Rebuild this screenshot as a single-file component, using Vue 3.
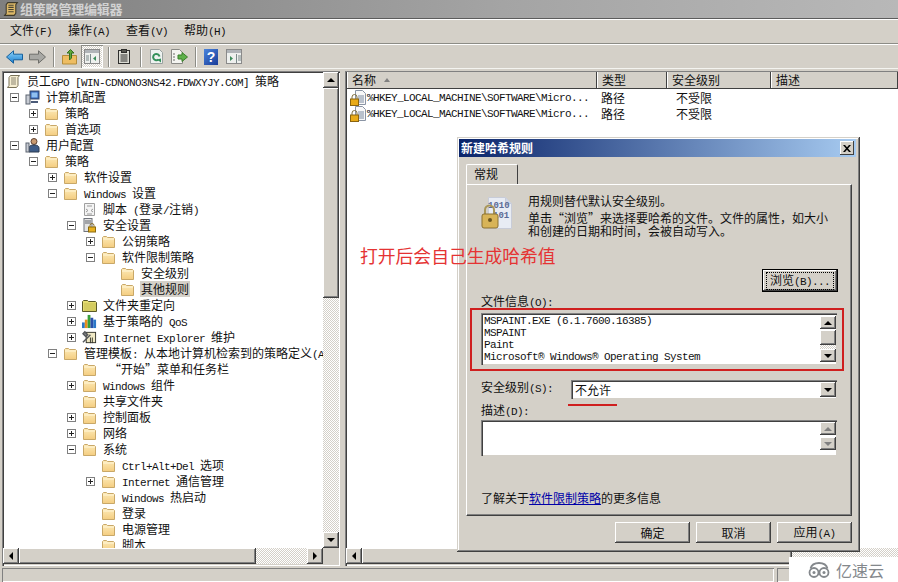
<script setup>
const tree = [
  { l: -1, e: '', i: 'scroll', t: '员工GPO [WIN-CDNONO3NS42.FDWXYJY.COM] 策略' },
  { l: 0, e: 'm', i: 'computer', t: '计算机配置' },
  { l: 1, e: 'p', i: 'folder', t: '策略' },
  { l: 1, e: 'p', i: 'folder', t: '首选项' },
  { l: 0, e: 'm', i: 'user', t: '用户配置' },
  { l: 1, e: 'm', i: 'folder', t: '策略' },
  { l: 2, e: 'p', i: 'folder', t: '软件设置' },
  { l: 2, e: 'm', i: 'folder', t: 'Windows 设置' },
  { l: 3, e: '', i: 'script', t: '脚本 (登录/注销)' },
  { l: 3, e: 'm', i: 'secure', t: '安全设置' },
  { l: 4, e: 'p', i: 'folder', t: '公钥策略' },
  { l: 4, e: 'm', i: 'folder', t: '软件限制策略' },
  { l: 5, e: '', i: 'folder', t: '安全级别' },
  { l: 5, e: '', i: 'folder', t: '其他规则', sel: true },
  { l: 3, e: 'p', i: 'redirect', t: '文件夹重定向' },
  { l: 3, e: 'p', i: 'qos', t: '基于策略的 QoS' },
  { l: 3, e: 'p', i: 'ie', t: 'Internet Explorer 维护' },
  { l: 2, e: 'm', i: 'folder', t: '管理模板: 从本地计算机检索到的策略定义(A' },
  { l: 3, e: '', i: 'folder', t: ' “开始”菜单和任务栏' },
  { l: 3, e: 'p', i: 'folder', t: 'Windows 组件' },
  { l: 3, e: '', i: 'folder', t: '共享文件夹' },
  { l: 3, e: 'p', i: 'folder', t: '控制面板' },
  { l: 3, e: 'p', i: 'folder', t: '网络' },
  { l: 3, e: 'm', i: 'folder', t: '系统' },
  { l: 4, e: '', i: 'folder', t: 'Ctrl+Alt+Del 选项' },
  { l: 4, e: 'p', i: 'folder', t: 'Internet 通信管理' },
  { l: 4, e: '', i: 'folder', t: 'Windows 热启动' },
  { l: 4, e: '', i: 'folder', t: '登录' },
  { l: 4, e: '', i: 'folder', t: '电源管理' },
  { l: 4, e: '', i: 'folder', t: '脚本' }
]
const menus = [
  ['文件', '(F)'],
  ['操作', '(A)'],
  ['查看', '(V)'],
  ['帮助', '(H)']
]
const columns = [
  { t: '名称', w: 250, sort: true },
  { t: '类型', w: 70 },
  { t: '安全级别', w: 104 },
  { t: '描述', w: 127 }
]
const rules = [1, 2]
const fileLines = [
  'MSPAINT.EXE (6.1.7600.16385)',
  'MSPAINT',
  'Paint',
  'Microsoft® Windows® Operating System'
]
function segs(s) {
  return s.match(/[\x20-\x7e®]+|[^\x20-\x7e®]+/g).map((x) => ({
    x,
    lat: /^[\x20-\x7e®]/.test(x)
  }))
}
function rowPad(r) {
  return r.l < 0 ? '6px' : 10 + 19 * r.l + 'px'
}
</script>

<template>
  <div class="app">
    <svg class="defs" width="0" height="0" aria-hidden="true">
      <defs>
        <linearGradient id="fg" x1="0" y1="0" x2="0" y2="1">
          <stop offset="0" stop-color="#fdeab8" />
          <stop offset="1" stop-color="#f4cd80" />
        </linearGradient>
        <linearGradient id="blue" x1="0" y1="0" x2="0" y2="1">
          <stop offset="0" stop-color="#8fd4fa" />
          <stop offset="1" stop-color="#1b7fd0" />
        </linearGradient>
        <symbol id="folder" viewBox="0 0 15 15">
          <path d="M1.500 13.500V3.500l1-1h3l1 1h6l1 1v9z" fill="url(#fg)" stroke="#c9a868" />
          <path d="M2 5h11" stroke="#fff6d8" />
        </symbol>
        <symbol id="scroll" viewBox="0 0 15 15">
          <path d="M4.500 1.500h9l-1.500 2v8l-1.500 2h-9l1.500-2v-8z" fill="#f6eed2" stroke="#7a7258" />
          <path d="M5 4h5M5 6h5M5 8h5M5 10h5" stroke="#8a8470" />
        </symbol>
        <symbol id="computer" viewBox="0 0 15 15">
          <rect x="5" y="1" width="9" height="8" fill="#2f62b8" stroke="#3a4a68" />
          <rect x="6.500" y="2.500" width="6" height="5" fill="#8fc0f0" />
          <rect x="1" y="5" width="4" height="9" fill="#c8ccd4" stroke="#5c6470" />
          <path d="M6 11h7v2H6z" fill="#4a5a78" />
        </symbol>
        <symbol id="user" viewBox="0 0 15 15">
          <circle cx="9" cy="3.500" r="3" fill="#c99a70" stroke="#5c4030" />
          <path d="M4 14V10q0-3 5-3t5 3v4z" fill="#3d5c88" stroke="#2c3a50" />
          <rect x="1" y="5" width="3" height="9" fill="#c8ccd4" stroke="#5c6470" />
        </symbol>
        <symbol id="script" viewBox="0 0 15 15">
          <path d="M2.500 1.500h10v12h-10z" fill="#f4f4f4" stroke="#a0a0a0" />
          <path d="M5 4h5M4 7l2 1.500L4 10M11 7L9 8.500l2 1.500M5 12h5" stroke="#9a9a9a" fill="none" />
        </symbol>
        <symbol id="secure" viewBox="0 0 15 15">
          <rect x="2" y="0.500" width="8" height="13" fill="#e4e4e4" stroke="#70747c" />
          <path d="M3 3h6M3 5h6" stroke="#60646c" />
          <path d="M8 9V7.500a2 2 0 0 1 4 0V9" fill="none" stroke="#8a7030" />
          <rect x="6.500" y="9" width="7" height="5" fill="#e8b020" stroke="#8a6a10" />
        </symbol>
        <symbol id="redirect" viewBox="0 0 15 15">
          <path d="M.5 13.500V3.500l1-1h4l1 1h7l1 1v9z" fill="#e4dc70" stroke="#5a5a28" />
          <path d="M2 6h12M2 8h12M2 10h12M2 12h12" stroke="#c4bc50" />
        </symbol>
        <symbol id="qos" viewBox="0 0 16 16">
          <rect x="0" y="9" width="3" height="6" fill="#2c78c8" />
          <rect x="3" y="6" width="3" height="9" fill="#e89020" />
          <rect x="6" y="1" width="3" height="14" fill="#38a038" />
          <rect x="9" y="4" width="3" height="11" fill="#2c50a8" />
          <rect x="12" y="6" width="3" height="9" fill="#2c78c8" />
        </symbol>
        <symbol id="ie" viewBox="0 0 16 16">
          <rect x="4.500" y="2.500" width="10" height="11" fill="#efe8c4" stroke="#33332a" />
          <path d="M1 13L9 5M3 2l3 3-2 2-3-3z" stroke="#55585c" stroke-width="1.600" fill="#888" />
          <path d="M9 8v6M11 8v6" stroke="#33332a" />
        </symbol>
        <symbol id="ruledoc" viewBox="0 0 16 16">
          <path d="M5.500 .5h7l3 3v11h-10z" fill="#f8f8f8" stroke="#8a94a4" />
          <path d="M8 6h6M8 8h6M8 10h6M8 12h6" stroke="#7a8aa0" />
          <path d="M2 9V7a2.500 2.500 0 0 1 5 0v2" fill="none" stroke="#807040" />
          <rect x=".5" y="9" width="8" height="6.500" fill="#e8aa18" stroke="#8a6410" />
        </symbol>
      </defs>
    </svg>

    <header class="title">
      <svg class="title-ico" width="16" height="16" viewBox="0 0 15 15">
        <path d="M4.500 1.500h9l-1.500 2v8l-1.500 2h-9l1.500-2v-8z" fill="#dcb868" stroke="#3e3a2c" />
        <path d="M5 4h5M5 6h5M5 8h5M5 10h5" stroke="#4a4432" />
      </svg>
      <span>组策略管理编辑器</span>
    </header>

    <nav class="menu">
      <span v-for="m in menus" :key="m[0]" class="menu-item">{{ m[0] }}<span class="lat">{{ m[1] }}</span></span>
    </nav>

    <div class="toolbar">
      <svg width="17" height="14" viewBox="0 0 17 14" class="t1">
        <path d="M.5 7L7.500.8v3.400h9v5.600h-9v3.400z" fill="url(#blue)" stroke="#17609c" />
      </svg>
      <svg width="17" height="14" viewBox="0 0 17 14" class="t2">
        <path d="M16.500 7L9.500.8v3.400h-9v5.600h9v3.400z" fill="#a8a8a4" stroke="#6e6e6a" />
      </svg>
      <i class="tsep t3"></i>
      <svg width="15" height="16" viewBox="0 0 15 16" class="t4">
        <path d="M.5 15V6.500h14V15z" fill="#eebd62" stroke="#b58d3a" />
        <path d="M7.500 11V4H5l3.500-3.500L12 4H9.500v5z" fill="#5ea83a" stroke="#34701e" />
      </svg>
      <span class="tpress t5">
        <svg width="16" height="15" viewBox="0 0 16 15">
          <rect x=".5" y=".5" width="15" height="14" fill="#eef0ee" stroke="#8a8a8a" />
          <rect x="1" y="1" width="14" height="3" fill="#b0b4b8" />
          <path d="M6.500 5v9M2 7h3M2 9h3M2 11h3" stroke="#7a8a8a" />
          <path d="M12 7v5l-3-2.500z" fill="#3a8a5a" />
        </svg>
      </span>
      <i class="tsep t6"></i>
      <svg width="12" height="15" viewBox="0 0 12 15" class="t7">
        <rect x=".5" y="1.500" width="11" height="13" fill="#dcdcd4" stroke="#2e2e2c" />
        <rect x="3.500" y=".5" width="5" height="3" fill="#55554f" stroke="#2e2e2c" />
        <path d="M2.500 6h7M2.500 8h7M2.500 10h7M2.500 12h7" stroke="#2e2e2c" />
      </svg>
      <i class="tsep t8"></i>
      <svg width="13" height="15" viewBox="0 0 13 15" class="t9">
        <path d="M.5.5h9l3 3v11H.500z" fill="#eef2f0" stroke="#9aa2a0" />
        <path d="M9.500 7.500a3.200 3.200 0 1 0-1 3" fill="none" stroke="#33905a" stroke-width="2" />
        <path d="M7 10.500l4-1v4z" fill="#33905a" />
      </svg>
      <svg width="17" height="15" viewBox="0 0 17 15" class="t10">
        <path d="M.5.5h8l3 3v11h-11z" fill="#f4f4f0" stroke="#8a8a86" />
        <path d="M2 5h2M2 8h2M2 11h2" stroke="#6a6a66" />
        <path d="M7 6h4V3.500L16.500 8 11 12.500V10H7z" fill="#5eb04a" stroke="#3a7e2a" />
      </svg>
      <i class="tsep t11"></i>
      <span class="help t12">?</span>
      <svg width="16" height="15" viewBox="0 0 16 15" class="t13">
        <rect x=".5" y=".5" width="15" height="14" fill="#eef0ee" stroke="#8a8a8a" />
        <rect x="1" y="1" width="14" height="3" fill="#b0b4b8" />
        <path d="M10.500 5v9M12 7h3M12 9h3M12 11h3" stroke="#7a8a8a" />
        <path d="M4 7v5l3-2.500z" fill="#3a8a5a" />
      </svg>
    </div>

    <main class="main">
      <section class="pane left">
        <div class="pane-body">
          <div class="tree">
            <div v-for="(r, n) in tree" :key="n" class="row" :style="{ paddingLeft: rowPad(r) }">
              <span v-if="r.l >= 0" class="exp" :class="{ none: !r.e }">
                <i v-if="r.e" class="dash"></i>
                <i v-if="r.e === 'p'" class="bar"></i>
              </span>
              <svg class="node-ico" width="15" height="15"><use :href="'#' + r.i" /></svg>
              <span class="label" :class="{ sel: r.sel }">
                <span v-for="(s, k) in segs(r.t)" :key="k" :class="{ lat: s.lat }">{{ s.x }}</span>
              </span>
            </div>
          </div>
          <div class="vbar">
            <span class="sbtn"><i class="tri up"></i></span>
            <span class="vthumb"></span>
            <span class="track"></span>
            <span class="sbtn"><i class="tri down"></i></span>
          </div>
        </div>
        <div class="hbar">
          <span class="sbtn"><i class="tri lft"></i></span>
          <span class="hthumb left-thumb"></span>
          <span class="track"></span>
          <span class="sbtn"><i class="tri rgt"></i></span>
          <span class="corner"></span>
        </div>
      </section>

      <section class="pane right">
        <div class="list-head">
          <span v-for="c in columns" :key="c.t" class="col" :style="{ width: c.w + 'px' }">
            {{ c.t }}<i v-if="c.sort" class="sort"></i>
          </span>
        </div>
        <div class="list-body">
          <div v-for="r in rules" :key="r" class="list-row">
            <span class="c-name">
              <svg width="16" height="16"><use href="#ruledoc" /></svg>
              <span class="lat">%HKEY_LOCAL_MACHINE\SOFTWARE\Micro...</span>
            </span>
            <span class="c-type">路径</span>
            <span class="c-level">不受限</span>
          </div>
        </div>
        <div class="hbar right-bar">
          <span class="sbtn"><i class="tri lft"></i></span>
          <span class="hthumb right-thumb"></span>
          <span class="track"></span>
        </div>
      </section>
    </main>

    <footer class="status">
      <span class="stat-a"></span>
      <span class="stat-b"></span>
    </footer>

    <div class="dialog">
      <div class="d-title">
        <span>新建哈希规则</span>
        <span class="close">
          <svg width="8" height="7" viewBox="0 0 8 7"><path d="M0 0l3 3.500L0 7h2l2-2.300L6 7h2L5 3.500 8 0H6L4 2.300 2 0z" fill="#000" /></svg>
        </span>
      </div>
      <div class="tab">常规</div>
      <div class="panel">
        <div class="intro">
          <svg class="intro-ico" width="32" height="32" viewBox="0 0 32 32">
            <path d="M7.500 .5h17l6 6v25h-23z" fill="#e8ecf4" stroke="#c8ccd8" />
            <path d="M24.500 .5v6h6" fill="#d0d6e6" stroke="#c8ccd8" />
            <text x="7" y="11" class="bits">1010</text>
            <text x="12" y="21" class="bits">101</text>
            <path d="M4 18v-5a4.500 4.500 0 0 1 9 0v5" fill="none" stroke="#a89658" stroke-width="2" />
            <rect x="1" y="17" width="16" height="14" rx="2" fill="#d8b458" stroke="#8a7030" />
            <circle cx="9" cy="23" r="2" fill="#6a5420" />
          </svg>
          <div class="intro-text">
            <p class="p1">用规则替代默认安全级别。</p>
            <p class="p2">单击“浏览”来选择要哈希的文件。文件的属性，如大小<br />和创建的日期和时间，会被自动写入。</p>
          </div>
        </div>
        <div class="browse-row">
          <button class="btn browse"><span class="focus">浏览<span class="lat">(B)...</span></span></button>
        </div>
        <label class="fld">文件信息<span class="lat">(O):</span></label>
        <div class="listbox">
          <div class="lb-text">
            <div v-for="l in fileLines" :key="l" class="lat lb-line">{{ l }}</div>
          </div>
          <div class="lb-bar">
            <span class="sbtn mini"><i class="tri up"></i></span>
            <span class="mini-thumb"></span>
            <span class="track"></span>
            <span class="sbtn mini"><i class="tri down"></i></span>
          </div>
        </div>
        <div class="level-row">
          <label class="fld level-label">安全级别<span class="lat">(S):</span></label>
          <div class="combo">
            <span>不允许</span>
            <span class="sbtn combo-btn"><i class="tri down"></i></span>
          </div>
        </div>
        <label class="fld desc-label">描述<span class="lat">(D):</span></label>
        <div class="desc">
          <div class="desc-bar">
            <span class="sbtn mini off"><i class="tri up"></i></span>
            <span class="sbtn mini off"><i class="tri down"></i></span>
          </div>
        </div>
        <p class="learn">了解关于<a>软件限制策略</a>的更多信息</p>
      </div>
      <div class="d-btns">
        <button class="btn act">确定</button>
        <button class="btn act">取消</button>
        <button class="btn act">应用<span class="lat">(A)</span></button>
      </div>
    </div>

    <div class="note">打开后会自己生成哈希值</div>
    <div class="red-box"></div>
    <div class="red-line"></div>

    <div class="mark">
      <svg width="24" height="16" viewBox="0 0 24 16">
        <circle cx="7" cy="10.500" r="4.500" fill="none" stroke="#84888c" stroke-width="1.800" />
        <circle cx="17" cy="10.500" r="4.500" fill="none" stroke="#84888c" stroke-width="1.800" />
        <circle cx="7" cy="10.500" r="1.500" fill="#84888c" />
        <circle cx="17" cy="10.500" r="1.500" fill="#84888c" />
        <path d="M3.500 6.500Q5 1 12 1t8.500 5.500" fill="none" stroke="#84888c" stroke-width="1.800" />
      </svg>
      <span>亿速云</span>
    </div>
  </div>
</template>

<style scoped>
.app {
  position: relative;
  width: 898px;
  height: 582px;
  overflow: hidden;
  background: #d4d0c8;
  color: #111;
  font: 12px/16px "Noto Sans CJK SC", "Liberation Sans", sans-serif;
  display: flex;
  flex-direction: column;
}
.defs { position: absolute; }
p { margin: 0; }
i { display: block; }
.lat {
  font-family: "Liberation Mono", monospace;
  font-size: 11px;
  letter-spacing: -0.6px;
  white-space: pre;
}
.title {
  height: 18px;
  flex: none;
  display: flex;
  align-items: center;
  gap: 1px;
  padding-left: 3px;
  background: linear-gradient(90deg, #7f7f7f, #a4a4a4 56%, #b8b8b8);
  color: #d2d2d2;
  font-size: 13px;
  font-weight: 700;
  letter-spacing: -.2px;
}
.title-ico { flex: none; }
.menu {
  flex: none;
  height: 26px;
  box-sizing: border-box;
  border-top: 1px solid #5c5c5c;
  border-bottom: 1px solid #8c8c86;
  box-shadow: inset 0 1px #fff, 0 1px #fff;
  display: flex;
  align-items: center;
  padding-left: 10px;
  gap: 16px;
}
.menu-item { width: 42px; white-space: nowrap; }
.toolbar {
  flex: none;
  box-sizing: border-box;
  height: 24px;
  margin-top: 1px;
  display: flex;
  align-items: center;
  padding-left: 6px;
  border-bottom: 1px solid #f4f4f0;
}
.toolbar > * { flex: none; }
.tsep { width: 1px; height: 20px; background: #8c8c86; box-shadow: 1px 0 #fff; }
.t2 { margin-left: 6px; }
.t3 { margin-left: 7px; }
.t4 { margin-left: 8px; }
.tpress {
  margin-left: 4px;
  width: 22px;
  height: 23px;
  display: flex;
  align-items: center;
  justify-content: center;
  background: repeating-conic-gradient(#d4d0c8 0 25%, #fff 0 50%) 0 0/2px 2px;
  box-shadow: inset 1px 1px #8c8c86, inset -1px -1px #fff;
}
.t6 { margin-left: 5px; }
.t7 { margin-left: 9px; }
.t8 { margin-left: 10px; }
.t9 { margin-left: 9px; }
.t10 { margin-left: 8px; }
.t11 { margin-left: 7px; }
.help {
  margin-left: 8px;
  width: 14px;
  height: 16px;
  background: linear-gradient(135deg, #4a84dc, #1a3c98);
  color: #fff;
  font: 700 14px/16px "Liberation Sans", sans-serif;
  text-align: center;
}
.t13 { margin-left: 8px; }

.main {
  flex: none;
  height: 497px;
  display: flex;
  padding: 2px 0 0 2px;
  box-sizing: border-box;
}
.pane {
  box-sizing: border-box;
  background: #fff;
  box-shadow: inset 1px 1px #808080, inset 2px 2px #404040, inset -1px -1px #fff, inset -2px -2px #d4d0c8;
  display: flex;
  flex-direction: column;
  padding: 2px;
  overflow: hidden;
}
.left { width: 338px; flex: none; }
.right { width: 560px; flex: none; margin-left: 5px; padding: 1px 0 2px 2px; }
.pane-body { flex: 1; min-height: 0; display: flex; }
.tree { flex: 1; min-width: 0; overflow: hidden; }
.row {
  height: 16px;
  display: flex;
  align-items: center;
  white-space: nowrap;
  margin-left: -4px;
}
.exp {
  flex: none;
  box-sizing: border-box;
  width: 9px;
  height: 9px;
  border: 1px solid #808080;
  background: #fff;
  margin-right: 6px;
  position: relative;
}
.exp.none { visibility: hidden; }
.dash { position: absolute; left: 1px; top: 3px; width: 5px; height: 1px; background: #222; }
.bar { position: absolute; left: 3px; top: 1px; width: 1px; height: 5px; background: #222; }
.node-ico { flex: none; margin-right: 5px; }
.label { padding: 0 1px; height: 16px; line-height: 16px; }
.label.sel { background: #d4d0c8; }
.vbar { width: 16px; flex: none; display: flex; flex-direction: column; margin: -1px -1px 0 0; }
.vthumb {
  height: 210px;
  flex: none;
  box-shadow: inset -1px -1px #404040, inset 1px 1px #fff, inset -2px -2px #808080;
  background: #d4d0c8;
}
.track { flex: 1; min-width: 0; min-height: 0; background: repeating-conic-gradient(#d4d0c8 0 25%, #fff 0 50%) 0 0/2px 2px; }
.sbtn {
  flex: none;
  width: 16px;
  height: 16px;
  background: #d4d0c8;
  box-shadow: inset -1px -1px #404040, inset 1px 1px #fff, inset -2px -2px #808080;
  display: flex;
  align-items: center;
  justify-content: center;
}
.tri { width: 0; height: 0; border: 4px solid transparent; }
.tri.up { border-bottom-color: #000; border-top-width: 0; }
.tri.down { border-top-color: #000; border-bottom-width: 0; }
.tri.lft { border-right-color: #000; border-left-width: 0; }
.tri.rgt { border-left-color: #000; border-right-width: 0; }
.hbar { height: 16px; flex: none; display: flex; margin-left: -1px; background: #d4d0c8; }
.hthumb {
  flex: none;
  height: 16px;
  background: #d4d0c8;
  box-shadow: inset -1px -1px #404040, inset 1px 1px #fff, inset -2px -2px #808080;
}
.left-thumb { width: 237px; }
.corner { width: 15px; flex: none; background: #d4d0c8; }
.right-thumb { width: 430px; }

.list-head { flex: none; display: flex; height: 16px; background: #d4d0c8; border-bottom: 1px solid #404040; }
.col {
  flex: none;
  box-sizing: border-box;
  padding-left: 5px;
  height: 16px;
  line-height: 16px;
  border-right: 1px solid #404040;
  box-shadow: inset 1px 0 #fff;
  display: flex;
  align-items: center;
}
.sort {
  width: 0;
  height: 0;
  margin-left: 8px;
  border: 3px solid transparent;
  border-top-width: 0;
  border-bottom: 4px solid #808080;
}
.list-body { flex: 1; min-height: 0; padding-top: 1px; }
.list-row { height: 16px; display: flex; align-items: center; }
.c-name { width: 254px; flex: none; display: flex; align-items: center; gap: 1px; padding-left: 3px; box-sizing: border-box; }
.c-type { width: 75px; flex: none; }
.c-level { flex: none; }

.status { flex: 1; display: flex; padding: 2px 0 0 2px; gap: 3px; }
.stat-a { width: 772px; flex: none; box-shadow: inset 1px 1px #808080, inset -1px -1px #fff; }
.stat-b { flex: 1; box-shadow: inset 1px 1px #808080, inset -1px -1px #fff; }

.dialog {
  position: absolute;
  left: 457px;
  top: 137px;
  width: 403px;
  height: 415px;
  box-sizing: border-box;
  padding: 2px;
  background: #d4d0c8;
  box-shadow: inset -1px -1px #404040, inset 1px 1px #d4d0c8, inset -2px -2px #808080, inset 2px 2px #fff;
  display: flex;
  flex-direction: column;
}
.d-title {
  flex: none;
  height: 18px;
  display: flex;
  align-items: center;
  justify-content: space-between;
  padding: 0 2px;
  margin-right: 2px;
  background: linear-gradient(90deg, #0a246a, #a6caf0);
  color: #fff;
  font-weight: 700;
}
.close {
  width: 14px;
  height: 14px;
  background: #d4d0c8;
  box-shadow: inset -1px -1px #404040, inset 1px 1px #fff;
  display: flex;
  align-items: center;
  justify-content: center;
}
.tab {
  flex: none;
  box-sizing: border-box;
  width: 52px;
  height: 20px;
  margin: 7px 0 0 7px;
  padding: 1px 0 0 7px;
  border-top: 1px solid #fff;
  border-left: 1px solid #fff;
  border-right: 1px solid #404040;
  border-radius: 2px 2px 0 0;
}
.panel {
  flex: none;
  box-sizing: border-box;
  width: 386px;
  height: 332px;
  margin-left: 7px;
  padding: 8px 14px 0;
  border-top: 1px solid #fff;
  border-left: 1px solid #fff;
  border-right: 1px solid #404040;
  border-bottom: 1px solid #404040;
  box-shadow: inset -1px -1px #808080;
}
.intro { display: flex; height: 44px; }
.intro-ico { flex: none; margin: 4px 15px 0 0; }
.bits { font: 700 9px "Liberation Mono", monospace; fill: #5a6a96; }
.intro-text { width: 320px; white-space: nowrap; }
.p1 { line-height: 16px; margin-bottom: 2px; }
.p2 { line-height: 13px; }
.browse-row { display: flex; justify-content: flex-end; margin-top: 33px; }
.btn {
  box-sizing: border-box;
  font: inherit;
  color: inherit;
  border: 0;
  padding: 0;
  background: #d4d0c8;
  box-shadow: inset -1px -1px #404040, inset 1px 1px #fff, inset -2px -2px #808080;
}
.browse {
  width: 74px;
  height: 21px;
  box-shadow: 0 0 0 1px #000, inset -1px -1px #404040, inset 1px 1px #fff, inset -2px -2px #808080;
  display: flex;
  align-items: center;
  justify-content: center;
}
.focus { outline: 1px dotted #000; padding: 0 3px; line-height: 13px; }
.fld { display: block; height: 12px; line-height: 12px; }
.browse-row + .fld { margin-top: 4px; }
.listbox {
  margin-top: 6px;
  height: 52px;
  box-sizing: border-box;
  padding: 2px 1px 2px 2px;
  background: #fff;
  box-shadow: inset 1px 1px #808080, inset 2px 2px #404040, inset -1px -1px #d4d0c8;
  display: flex;
}
.lb-text { flex: 1; min-width: 0; padding-left: 1px; }
.lb-line { height: 12px; line-height: 12px; }
.lb-bar { width: 16px; flex: none; display: flex; flex-direction: column; margin: 1px 0; }
.sbtn.mini { height: 13px; }
.mini-thumb { height: 15px; flex: none; margin-top: 1px; box-shadow: inset -1px -1px #404040, inset 1px 1px #fff, inset -2px -2px #808080; background: #d4d0c8; }
.level-row { display: flex; align-items: flex-start; margin-top: 15px; }
.level-label { width: 90px; flex: none; margin-top: 1px; }
.combo {
  flex: 1;
  height: 19px;
  box-sizing: border-box;
  padding: 2px 1px 0 4px;
  background: #fff;
  box-shadow: inset 1px 1px #808080, inset 2px 2px #404040, inset -1px -1px #d4d0c8;
  display: flex;
  justify-content: space-between;
  line-height: 16px;
}
.sbtn.combo-btn { height: 15px; }
.desc-label { margin-top: 5px; }
.desc {
  margin-top: 4px;
  height: 36px;
  box-sizing: border-box;
  padding: 2px 1px;
  background: #fff;
  box-shadow: inset 1px 1px #808080, inset 2px 2px #404040, inset -1px -1px #d4d0c8;
  display: flex;
  justify-content: flex-end;
}
.desc-bar { width: 16px; display: flex; flex-direction: column; gap: 2px; }
.sbtn.off .tri.up { border-bottom-color: #808080; }
.sbtn.off .tri.down { border-top-color: #808080; }
.learn { margin-top: 34px; height: 16px; }
.learn a { color: #0000a8; text-decoration: underline; }
.d-btns { display: flex; justify-content: flex-end; gap: 6px; margin-top: 6px; padding-right: 6px; }
.btn.act { width: 75px; height: 21px; line-height: 19px; }

.note {
  position: absolute;
  left: 360px;
  top: 244px;
  font-size: 17.800px;
  line-height: 22px;
  color: #e53333;
  white-space: nowrap;
}
.red-box {
  position: absolute;
  left: 470px;
  top: 308px;
  width: 374px;
  height: 63px;
  box-sizing: border-box;
  border: 2px solid #cf1f1f;
}
.red-line {
  position: absolute;
  left: 568px;
  top: 404px;
  width: 49px;
  height: 2px;
  background: #cf1f1f;
}
.mark {
  position: absolute;
  left: 789px;
  top: 557px;
  width: 109px;
  height: 25px;
  box-sizing: border-box;
  padding-left: 18px;
  background: #fff;
  display: flex;
  align-items: center;
  gap: 5px;
  color: #84888c;
  font-size: 16px;
}
</style>
